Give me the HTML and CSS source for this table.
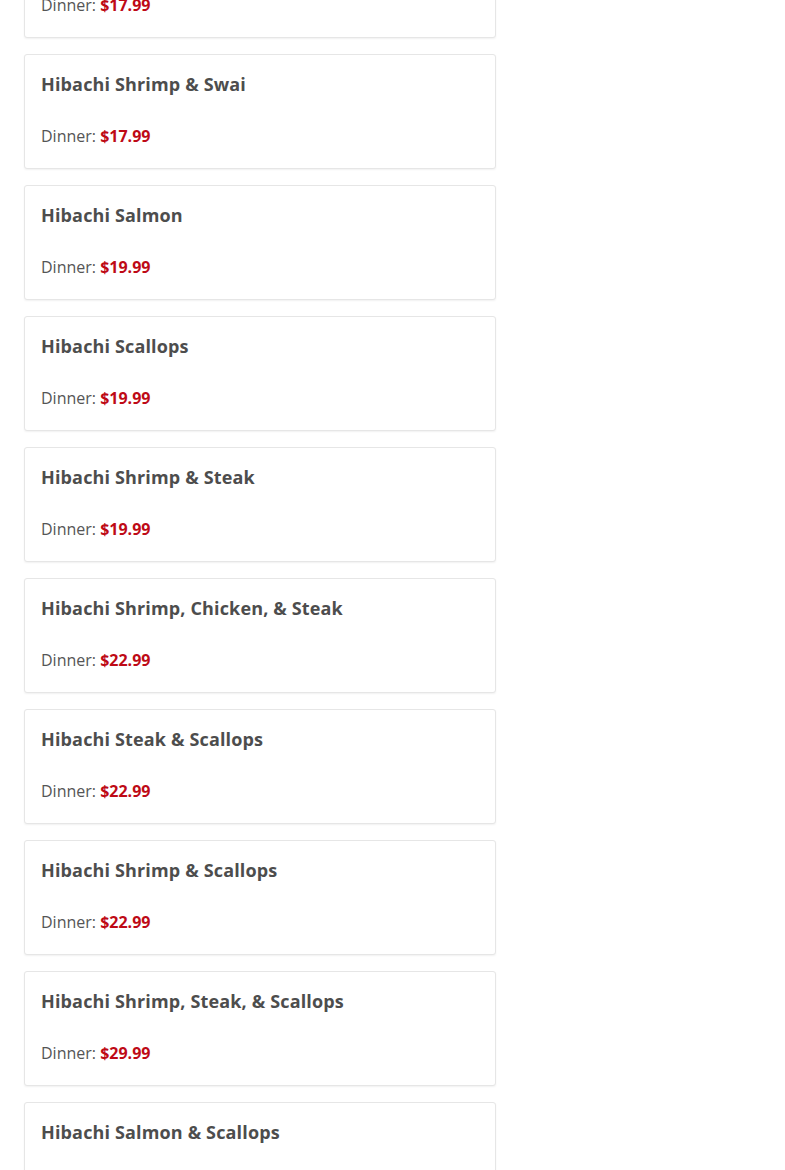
FILE: index.html
```html
<!DOCTYPE html>
<html lang="en">
<head>
  <meta charset="UTF-8" />
  <title>Hibachi Menu</title>
  <link rel="stylesheet" href="styles.css">
</head>
<body>
  <div class="menu-list">
    <div class="item">
      <h3 class="item-name">Hibachi Shrimp</h3>
      <p class="item-price">Dinner: <span class="price">$17.99</span></p>
    </div>
    <div class="item">
      <h3 class="item-name">Hibachi Shrimp &amp; Swai</h3>
      <p class="item-price">Dinner: <span class="price">$17.99</span></p>
    </div>
    <div class="item">
      <h3 class="item-name">Hibachi Salmon</h3>
      <p class="item-price">Dinner: <span class="price">$19.99</span></p>
    </div>
    <div class="item">
      <h3 class="item-name">Hibachi Scallops</h3>
      <p class="item-price">Dinner: <span class="price">$19.99</span></p>
    </div>
    <div class="item">
      <h3 class="item-name">Hibachi Shrimp &amp; Steak</h3>
      <p class="item-price">Dinner: <span class="price">$19.99</span></p>
    </div>
    <div class="item">
      <h3 class="item-name">Hibachi Shrimp, Chicken, &amp; Steak</h3>
      <p class="item-price">Dinner: <span class="price">$22.99</span></p>
    </div>
    <div class="item">
      <h3 class="item-name">Hibachi Steak &amp; Scallops</h3>
      <p class="item-price">Dinner: <span class="price">$22.99</span></p>
    </div>
    <div class="item">
      <h3 class="item-name">Hibachi Shrimp &amp; Scallops</h3>
      <p class="item-price">Dinner: <span class="price">$22.99</span></p>
    </div>
    <div class="item">
      <h3 class="item-name">Hibachi Shrimp, Steak, &amp; Scallops</h3>
      <p class="item-price">Dinner: <span class="price">$29.99</span></p>
    </div>
    <div class="item">
      <h3 class="item-name">Hibachi Salmon &amp; Scallops</h3>
      <p class="item-price">Dinner: <span class="price">$29.99</span></p>
    </div>
  </div>
</body>
</html>
```

FILE: styles.css
```css
* {
  box-sizing: border-box;
}

body {
  margin: 0;
  padding: 0 24px;
  font-family: 'Open Sans', sans-serif;
  background: #fff;
  color: #555;
}

.menu-list {
  width: 472px;
  margin-top: -76px;
  display: flex;
  flex-direction: column;
  gap: 16px;
}

.item {
  height: 115px;
  padding: 16px 16px;
  border: 1px solid #e6e6e6;
  border-radius: 3px;
  box-shadow: 0 1px 2px rgba(0, 0, 0, 0.06);
  background: #fff;
}

.item:first-child {
  margin-top: -1px;
}

.item-name {
  margin: 0;
  font-size: 18px;
  line-height: 27px;
  font-weight: 700;
  letter-spacing: 0.15px;
  color: #4d4d4d;
}

.item-price {
  margin: 26px 0 0;
  font-size: 16px;
  line-height: 24px;
  color: #555;
}

.price {
  font-weight: 700;
  color: #be0a16;
}
```
